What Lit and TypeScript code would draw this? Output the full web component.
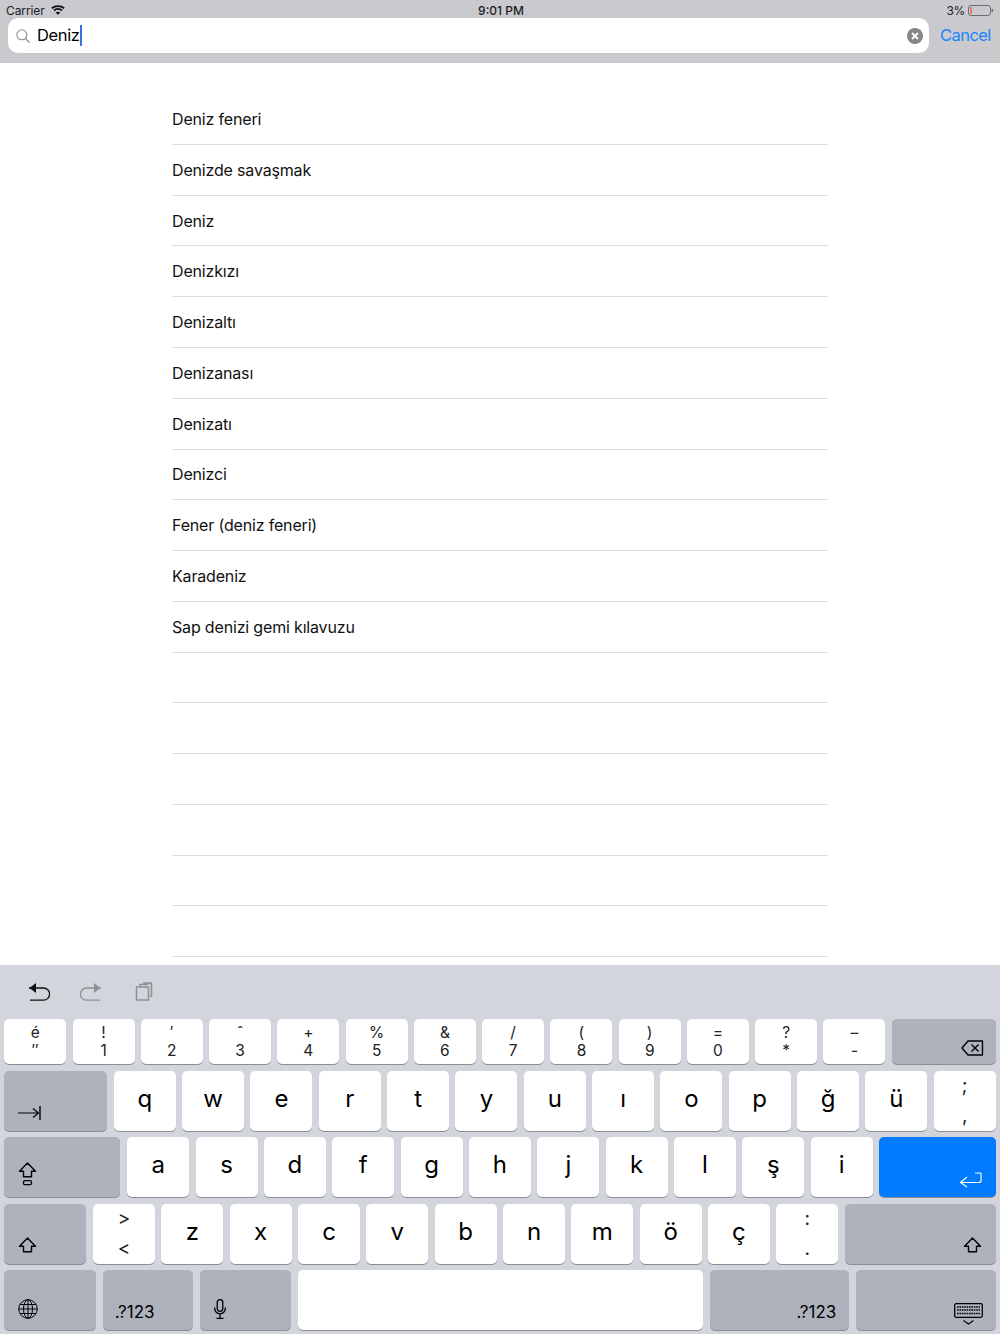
import { LitElement, html, css, svg } from "lit";
import { customElement } from "lit/decorators.js";

const items = ["Deniz feneri","Denizde savaşmak","Deniz","Denizkızı","Denizaltı","Denizanası","Denizatı","Denizci","Fener (deniz feneri)","Karadeniz","Sap denizi gemi kılavuzu","","","","","",""];
const row1 = [["é","″"],["!","1"],["′","2"],["ˆ","3"],["+","4"],["%","5"],["&","6"],["/","7"],["(","8"],[")","9"],["=","0"],["?","*"],["–","-"]];
const row2 = ["q","w","e","r","t","y","u","ı","o","p","ğ","ü"];
const row3 = ["a","s","d","f","g","h","j","k","l","ş","i"];
const row4 = ["z","x","c","v","b","n","m","ö","ç"];

const shift = svg`<path d="M9.500 1 1.500 9.200h4v5.600h8V9.200h4Z" fill="none" stroke="#000" stroke-width="1.400" stroke-linejoin="round"/>`;

@customElement("app-root")
export class AppRoot extends LitElement {
  static styles = css`
    :host { display: flex; flex-direction: column; height: 1334px; width: 1000px; overflow: hidden; background: #fff; font-family: Inter, "Liberation Sans", sans-serif; color: #000; }
    .head { background: #c9c9ce; height: 63px; flex: none; display: flex; flex-direction: column; }
    .status { height: 18px; flex: none; display: grid; grid-template-columns: 1fr auto 1fr; align-items: center; padding: 2px 7px 0 6px; box-sizing: border-box; font-size: 12px; color: #1c1c1e; }
    .st-l { display: flex; align-items: center; gap: 6px; letter-spacing: -0.1px; }
    .st-r { display: flex; align-items: center; justify-content: flex-end; gap: 3px; letter-spacing: -0.4px; }
    .time { font-weight: 500; margin-left: 3px; }
    .searchrow { display: flex; align-items: center; padding: 0 9px 0 8px; gap: 11px; }
    .field { flex: 1; height: 35px; background: #fff; border-radius: 10px; display: flex; align-items: center; padding: 0 6px 0 8px; }
    .field .txt { font-size: 16.5px; margin-left: 7px; letter-spacing: -0.35px; line-height: 20px; margin-top: -2px; }
    .caret { width: 2px; height: 21px; background: #3d6fe6; }
    .clear { margin-left: auto; display: flex; }
    .cancel { color: #1a84ff; font-size: 16.5px; letter-spacing: -0.55px; width: 51px; white-space: nowrap; margin-top: -2px; }
    .list { flex: 1; min-height: 0; overflow: hidden; padding: 31.2px 172px 0; }
    .item { height: 50.77px; box-sizing: border-box; border-bottom: 1px solid #dcdcdc; display: flex; align-items: center; font-size: 16px; letter-spacing: -0.17px; color: #111; }
    .kb { flex: none; height: 369px; background: #d2d5db; box-sizing: border-box; display: flex; flex-direction: column; }
    .tools { height: 54.3px; flex: none; display: flex; align-items: center; padding: 0 0 0 28px; }
    .tools svg { display: block; }
    .redo { margin-left: 30px; }
    .paste { margin-left: 33px; }
    .rows { display: flex; flex-direction: column; gap: 6.5px; padding: 0 4.3px; }
    .row { display: flex; gap: 6.33px; height: 60px; }
    .row.short { height: 45px; gap: 6.27px; }
    .row.bottom { gap: 7px; }
    .k { width: 62px; flex: none; background: #fff; border-radius: 5px; box-shadow: 0 1px 0 #8c8e92; display: flex; align-items: center; justify-content: center; font-size: 24px; box-sizing: border-box; }
    .k.dual { flex-direction: column; font-size: 15.5px; line-height: 18px; color: #222; }
    .row:not(.short) .k.dual { font-size: 19px; line-height: 30px; }
    .k.letter { padding-bottom: 5px; }
    .d { background: #aeb2bc; align-items: flex-end; justify-content: flex-start; padding: 0 0 11px 14px; font-size: 17px; }
    .d.right { justify-content: flex-end; padding: 0 14px 11px 0; }
    .d.right.del { padding-bottom: 8px; padding-right: 12px; }
    .grow { flex: 1; width: auto; }
    .caps { width: 115.7px; margin-right: 1px; }
    .lshift { width: 81.7px; margin-right: .7px; }
    .globe { width: 91.4px; }
    .num { width: 90.3px; padding-left: 12px; padding-bottom: 8px; }
    .mic { width: 90.7px; }
    .num2 { width: 139.3px; }
    .d.right.num2 { padding-right: 13px; padding-bottom: 8px; }
    .last { width: 139.4px; }
    .d.right.last { padding-right: 13px; padding-bottom: 5px; }
    .d.right.ret { background: #007aff; padding-bottom: 9px; padding-right: 14px; }
    .label { line-height: 20px; }
    .space { flex: 1; width: auto; }
  `;

  key(l: string) { return html`<div class="k letter">${l}</div>`; }
  dual(a: string, b: string) { return html`<div class="k dual"><span>${a}</span><span>${b}</span></div>`; }

  render() {
    return html`
      <div class="head">
        <div class="status">
          <div class="st-l"><span>Carrier</span>
            <svg width="14" height="10" viewBox="0 0 14 10" fill="none" stroke="#111" stroke-width="1.800"><path d="M.8 3.300c3.500-3 8.900-3 12.400 0M3 5.500c2.300-2 5.700-2 8 0"/><path d="M7 9.800 4.600 7.400c1.400-1 3.400-1 4.800 0Z" fill="#111" stroke="none"/></svg>
          </div>
          <div class="time">9:01 PM</div>
          <div class="st-r"><span>3%</span>
            <svg width="25" height="11" viewBox="0 0 25 11"><rect x=".5" y=".5" width="22" height="10" rx="2.500" fill="none" stroke="#6e6e70"/><rect x="2" y="2" width="2" height="7" fill="#f0766e"/><rect x="23.500" y="4" width="1.500" height="3" fill="#6e6e70"/></svg>
          </div>
        </div>
        <div class="searchrow">
          <div class="field">
            <svg width="14" height="14" viewBox="0 0 14 14"><circle cx="5.800" cy="5.800" r="5" fill="none" stroke="#8e8e93" stroke-width="1.100"/><path d="m9.500 9.500 4 4" stroke="#8e8e93" stroke-width="1.300"/></svg>
            <span class="txt">Deniz</span><span class="caret"></span>
            <span class="clear"><svg width="16" height="16" viewBox="0 0 16 16"><circle cx="8" cy="8" r="8" fill="#85858b"/><path d="m5 5 6 6m0-6-6 6" stroke="#fff" stroke-width="1.800"/></svg></span>
          </div>
          <div class="cancel">Cancel</div>
        </div>
      </div>
      <div class="list">${items.map((t) => html`<div class="item">${t}</div>`)}</div>
      <div class="kb">
        <div class="tools">
          <svg width="22" height="20" viewBox="0 0 22 20"><path d="M1 6h14.500a5.500 5.500 0 0 1 0 12.200H2" fill="none" stroke="#111" stroke-width="1.300"/><path d="M8 1 1.500 6 8 11Z" fill="#111"/></svg>
          <svg class="redo" width="22" height="20" viewBox="0 0 22 20"><path d="M21 6H6.500a5.500 5.500 0 0 0 0 12.200H20" fill="none" stroke="#8e9095" stroke-width="1.300"/><path d="m14 1 6.500 5L14 11Z" fill="#8e9095"/></svg>
          <svg class="paste" width="18" height="20" viewBox="0 0 18 20"><path d="M5 4V2.500h7.500M12.500 1.500h4V14h-2M9 2.500V1h7.500" fill="none" stroke="#8e9095" stroke-width="1.500"/><rect x="1.500" y="5" width="12" height="13" fill="none" stroke="#8e9095" stroke-width="1.500"/></svg>
        </div>
        <div class="rows">
          <div class="row short">
            ${row1.map(([a, b]) => this.dual(a, b))}
            <div class="k d right grow del">
              <svg width="23" height="16" viewBox="0 0 23 16"><path d="M7 1h14.500v14H7L1 8Z" fill="none" stroke="#000" stroke-width="1.400" stroke-linejoin="round"/><path d="m10.500 4.500 7 7m0-7-7 7" stroke="#000" stroke-width="1.400"/></svg>
            </div>
          </div>
          <div class="row">
            <div class="k d grow">
              <svg width="23" height="14" viewBox="0 0 23 14"><path d="M0 7h20M15 2.500 20.500 7 15 11.500" fill="none" stroke="#000" stroke-width="1.200"/><path d="M22 0v14" stroke="#000" stroke-width="1.400"/></svg>
            </div>
            ${row2.map((l) => this.key(l))}
            ${this.dual(";", ",")}
          </div>
          <div class="row">
            <div class="k d caps">
              <svg width="19" height="24" viewBox="0 0 19 24">${shift}<rect x="5.500" y="18.700" width="8" height="4" rx="1.500" fill="none" stroke="#000" stroke-width="1.300"/></svg>
            </div>
            ${row3.map((l) => this.key(l))}
            <div class="k d right grow ret">
              <svg width="23" height="16" viewBox="0 0 23 16"><path d="M22 1v7.500a2 2 0 0 1-2 2H1.500M8 5 1.500 10.500 8 15M16 1h6" fill="none" stroke="#fff" stroke-width="1.200"/></svg>
            </div>
          </div>
          <div class="row">
            <div class="k d lshift"><svg width="19" height="16" viewBox="0 0 19 16">${shift}</svg></div>
            ${this.dual(">", "<")}
            ${row4.map((l) => this.key(l))}
            ${this.dual(":", ".")}
            <div class="k d right grow"><svg width="19" height="16" viewBox="0 0 19 16">${shift}</svg></div>
          </div>
          <div class="row bottom">
            <div class="k d globe">
              <svg width="20" height="20" viewBox="0 0 20 20" fill="none" stroke="#000" stroke-width="1"><circle cx="10" cy="10" r="9.300"/><ellipse cx="10" cy="10" rx="4.500" ry="9.300"/><path d="M10 .7v18.600M.7 10h18.600M2 5.500h16M2 14.500h16"/></svg>
            </div>
            <div class="k d num"><span class="label">.?123</span></div>
            <div class="k d mic">
              <svg width="12" height="20" viewBox="0 0 12 20" fill="none" stroke="#000" stroke-width="1.300"><rect x="3.200" y=".7" width="5.600" height="11.600" rx="2.800"/><path d="M.7 8.500v1a5.300 5.300 0 0 0 10.600 0v-1M6 15v4M2.500 19.300h7"/></svg>
            </div>
            <div class="k space"></div>
            <div class="k d right num2"><span class="label">.?123</span></div>
            <div class="k d right last">
              <svg width="29" height="22" viewBox="0 0 29 22" fill="none" stroke="#000"><rect x=".7" y=".7" width="27.600" height="13.600" rx="1.500" stroke-width="1.300"/><path d="M3 4h23M3 7h23M3 10.500h23" stroke-width="1.600" stroke-dasharray="1.600 .8"/><path d="m9.500 17.500 5 3.500 5-3.500" stroke-width="1.100"/></svg>
            </div>
          </div>
        </div>
      </div>
    `;
  }
}
